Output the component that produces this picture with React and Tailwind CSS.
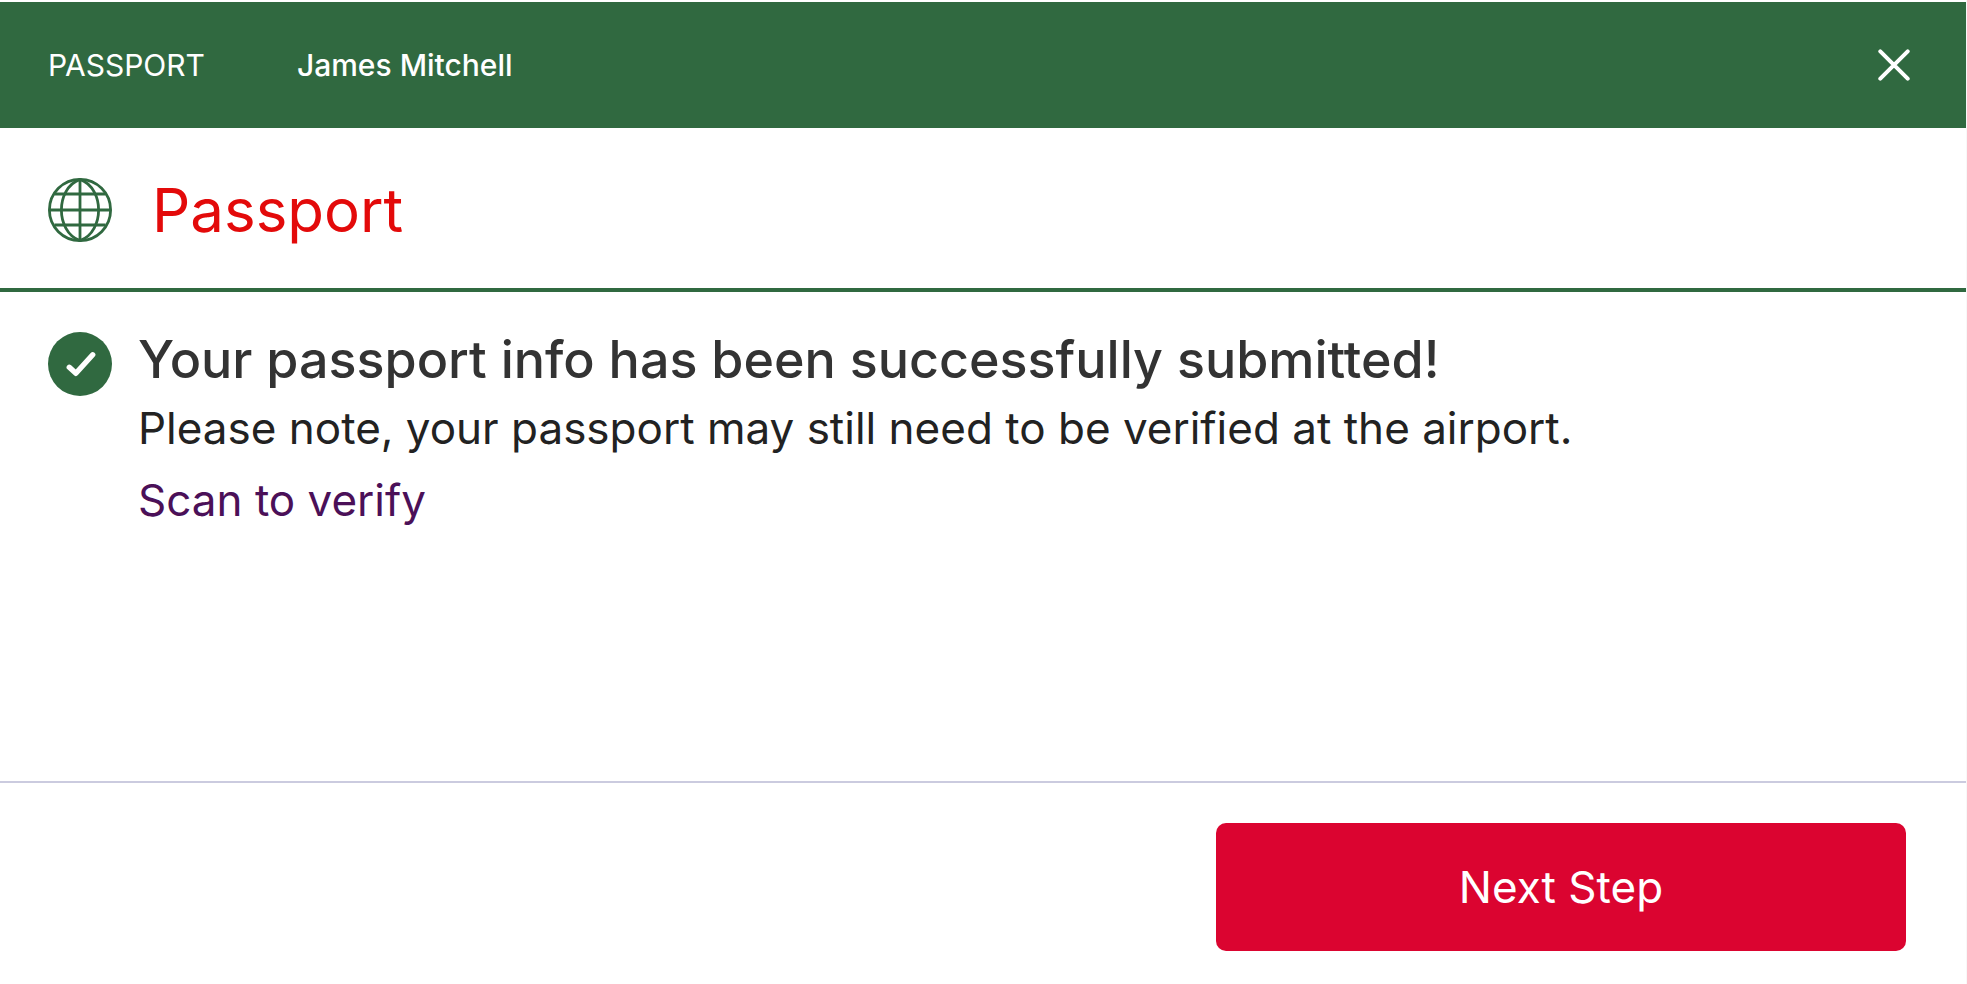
function CloseIcon() {
  return (
    <svg viewBox="0 0 32 32" className="size-8" fill="none" stroke="currentColor" strokeWidth="4" strokeLinecap="round" aria-hidden="true">
      <path d="M2.3 2.3 29.7 29.7M29.7 2.3 2.3 29.7" />
    </svg>
  );
}

function GlobeIcon() {
  return (
    <svg viewBox="0 0 64 64" className="size-16 shrink-0" fill="none" stroke="currentColor" strokeWidth="2.8" aria-hidden="true">
      <circle cx="32" cy="32" r="30.6" />
      <path d="M32 1.4v61.2M1.4 32h61.2M6.5 16h51M6.5 47h51" />
      <path d="M32 1.4C19 6 13.4 20 13.4 32S19 58 32 62.6C45 58 50.6 44 50.6 32S45 6 32 1.4Z" />
    </svg>
  );
}

function CheckIcon() {
  return (
    <svg viewBox="0 0 64 64" className="size-16 shrink-0" aria-hidden="true">
      <circle cx="32" cy="32" r="32" fill="#306940" />
      <path d="m21.3 35.3 6.6 6L44.7 22.8" fill="none" stroke="#fff" strokeWidth="5.4" strokeLinecap="round" strokeLinejoin="round" />
    </svg>
  );
}

export default function App() {
  return (
    <div className="flex min-h-screen flex-col border-r border-[#f8f8f8] bg-white pt-0.5 font-['Inter',sans-serif] text-[#222222]">
      <header className="flex h-[126px] items-center justify-between bg-[#306940] pr-14 pl-12 text-white">
        <div className="flex items-center gap-23 text-[30px] leading-10">
          <span>PASSPORT</span>
          <span className="font-medium">James Mitchell</span>
        </div>
        <button type="button" aria-label="Close" className="cursor-pointer">
          <CloseIcon />
        </button>
      </header>

      <div className="flex h-[164px] items-center gap-10 border-b-4 border-[#306940] px-12 pt-1 text-[#306940]">
        <GlobeIcon />
        <h1 className="text-[60px] leading-[72px] text-[#e30a0a]">Passport</h1>
      </div>

      <main className="flex grow items-start gap-[26px] px-12 pt-10">
        <CheckIcon />
        <div>
          <h2 className="text-[52px] leading-14 font-medium text-[#333333]">
            Your passport info has been successfully submitted!
          </h2>
          <p className="mt-3 text-[44px] leading-14">
            Please note, your passport may still need to be verified at the airport.
          </p>
          <a href="#scan" className="mt-4 inline-block text-[44px] leading-14 text-[#4b1058]">
            Scan to verify
          </a>
        </div>
      </main>

      <footer className="flex justify-end border-t-2 border-[#cbcbdf] pt-10 pr-15 pb-[33px] pl-12">
        <button type="button" className="h-32 w-[690px] cursor-pointer rounded-[10px] bg-[#db0430] text-[44px] leading-14 text-white">
          Next Step
        </button>
      </footer>
    </div>
  );
}
